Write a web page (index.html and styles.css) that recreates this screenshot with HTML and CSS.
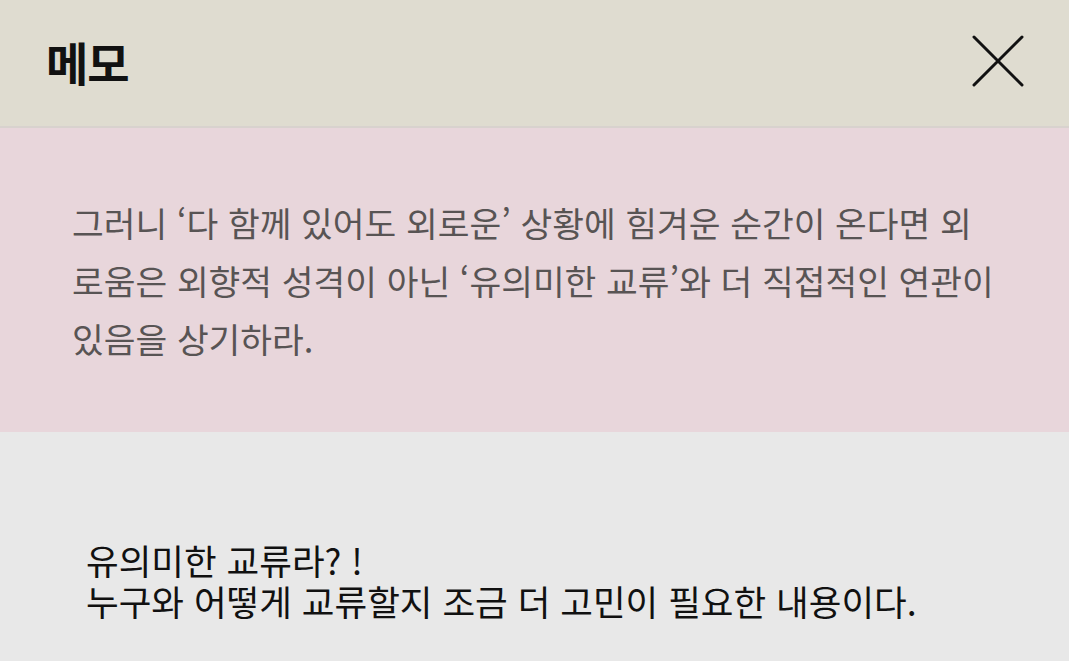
FILE: index.html
```html
<!DOCTYPE html>
<html lang="ko">
<head>
<meta charset="utf-8">
<link rel="stylesheet" href="styles.css">
</head>
<body>
<div class="memo">
  <header class="memo-header">
    <h1 class="memo-title">메모</h1>
    <button class="close-btn" aria-label="닫기">
      <svg width="52" height="52" viewBox="0 0 52 52"><path d="M2 2 L50 50 M50 2 L2 50" stroke="#111" stroke-width="3" stroke-linecap="round" fill="none"/></svg>
    </button>
  </header>
  <section class="quote">
    <p>그러니 ‘다 함께 있어도 외로운’ 상황에 힘겨운 순간이 온다면 외로움은 외향적 성격이 아닌 ‘유의미한 교류’와 더 직접적인 연관이 있음을 상기하라.</p>
  </section>
  <section class="note">
    <p>유의미한 교류라? !<br>누구와 어떻게 교류할지 조금 더 고민이 필요한 내용이다.</p>
  </section>
</div>
</body>
</html>
```

FILE: styles.css
```css
* { box-sizing: border-box; }
html, body { margin: 0; padding: 0; }
body {
  width: 1069px;
  height: 661px;
  overflow: hidden;
  font-family: "Noto Sans CJK KR", "Noto Sans", sans-serif;
  background: #e8e8e8;
}
.memo { display: flex; flex-direction: column; height: 661px; }
.memo-header {
  height: 128px;
  flex: none;
  background: #dfdcd0;
  border-bottom: 2px solid #d8d2ce;
  display: flex;
  align-items: center;
  justify-content: space-between;
  padding: 0 45px 0 46px;
}
.memo-title {
  margin: 0;
  font-size: 46px;
  font-weight: 700;
  color: #111;
  letter-spacing: -1px;
  line-height: 1;
  padding-bottom: 4px;
}
.close-btn {
  border: 0;
  background: transparent;
  padding: 0;
  width: 52px;
  height: 52px;
  display: flex;
  margin-bottom: 4px;
}
.quote {
  height: 304px;
  flex: none;
  background: #e8d6db;
  padding: 65px 70px 0 72px;
}
.quote p {
  margin: 0;
  font-size: 34.5px;
  line-height: 58px;
  color: #585454;
}
.note {
  flex: 1;
  background: #e8e8e8;
  padding: 107px 40px 0 86px;
}
.note p {
  margin: 0;
  font-size: 35.5px;
  line-height: 41px;
  color: #111;
}
```
